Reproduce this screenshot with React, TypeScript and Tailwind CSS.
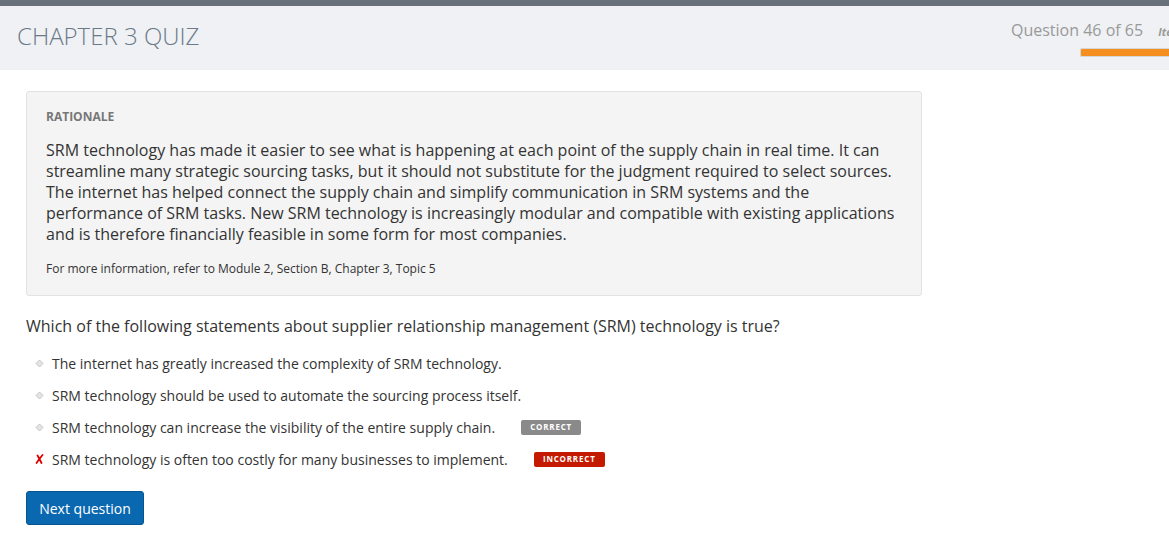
import React from 'react'

interface Option {
  text: string
  badge?: 'correct' | 'incorrect'
  chosen?: boolean
}

const options: Option[] = [
  { text: 'The internet has greatly increased the complexity of SRM technology.' },
  { text: 'SRM technology should be used to automate the sourcing process itself.' },
  { text: 'SRM technology can increase the visibility of the entire supply chain.', badge: 'correct' },
  { text: 'SRM technology is often too costly for many businesses to implement.', badge: 'incorrect', chosen: true },
]

const Diamond = () => (
  <svg width="9" height="9" viewBox="0 0 9 9" className="block">
    <path d="M4.5 1 L8 4.5 L4.5 8 L1 4.5 Z" fill="#e4e4e4" stroke="#c4c4c4" strokeWidth="1" />
  </svg>
)

const Cross = () => (
  <svg width="9" height="10" viewBox="0 0 9 10" className="block">
    <path d="M2.5 1.5 C4 4 5 6 6.5 9 M7.5 1 C5.5 3.5 3.5 6 1.5 9" stroke="#e00000" strokeWidth="1.8" fill="none" strokeLinecap="round" />
  </svg>
)

const App = () => {
  return (
    <div className="w-[1169px] h-[533px] overflow-hidden bg-white text-[#333] font-['Open_Sans',sans-serif]">
      <div className="h-[6px] bg-[#687079]" />
      <div className="h-[64px] bg-[#eff1f4] flex overflow-hidden">
        <h1 className="flex-1 pl-[17px] pt-[14px] text-[24px] leading-[32px] font-light text-[#6c7987]">CHAPTER 3 QUIZ</h1>
        <div className="w-[158px] shrink-0 pt-[13px]">
          <div className="flex items-baseline whitespace-nowrap">
            <span className="text-[16px] leading-[22px] text-[#999]">Question 46 of 65</span>
            <span className="ml-[15px] text-[11px] font-bold italic text-[#999]">Item 46</span>
          </div>
          <div className="ml-[69px] mt-[7px] h-[9px] rounded-l-[2px] border border-r-0 border-[#d6d6d6] bg-[#f48f1f]" />
        </div>
      </div>

      <div className="ml-[26px] mt-[21px] w-[896px] rounded-[3px] border border-[#e2e2e2] bg-[#f4f4f4] px-[19px] pt-[17px] pb-[18px]">
        <div className="text-[12px] leading-[16px] font-bold text-[#777]">RATIONALE</div>
        <p className="mt-[15px] text-[16px] leading-[21px]">
          SRM technology has made it easier to see what is happening at each point of the supply chain in real time. It can streamline many strategic sourcing tasks, but it should not substitute for the judgment required to select sources. The internet has helped connect the supply chain and simplify communication in SRM systems and the performance of SRM tasks. New SRM technology is increasingly modular and compatible with existing applications and is therefore financially feasible in some form for most companies.
        </p>
        <p className="mt-[16px] text-[12px] leading-[16px]">For more information, refer to Module 2, Section B, Chapter 3, Topic 5</p>
      </div>

      <div className="ml-[26px] mt-[20px] text-[16px] leading-[21px]">
        Which of the following statements about supplier relationship management (SRM) technology is true?
      </div>

      <ul className="mt-[10px] ml-[26px]">
        {options.map((opt, i) => (
          <li key={i} className="flex items-center h-[32px] text-[14px]">
            <span className="w-[26px] flex justify-center">
              {opt.chosen ? <Cross /> : <Diamond />}
            </span>
            <span>{opt.text}</span>
            {opt.badge === 'correct' && (
              <span className="ml-[26px] w-[60px] h-[15px] flex items-center justify-center rounded-[2px] bg-[#8a8a8a] text-white text-[8px] font-bold tracking-[0.8px]">CORRECT</span>
            )}
            {opt.badge === 'incorrect' && (
              <span className="ml-[26px] w-[71px] h-[15px] flex items-center justify-center rounded-[2px] bg-[#c41a00] text-white text-[8px] font-bold tracking-[0.8px]">INCORRECT</span>
            )}
          </li>
        ))}
      </ul>

      <button className="ml-[26px] mt-[16px] w-[118px] h-[34px] rounded-[3px] border border-[#07548f] bg-[#0a68b0] text-white text-[14px]">
        Next question
      </button>
    </div>
  )
}

export default App
